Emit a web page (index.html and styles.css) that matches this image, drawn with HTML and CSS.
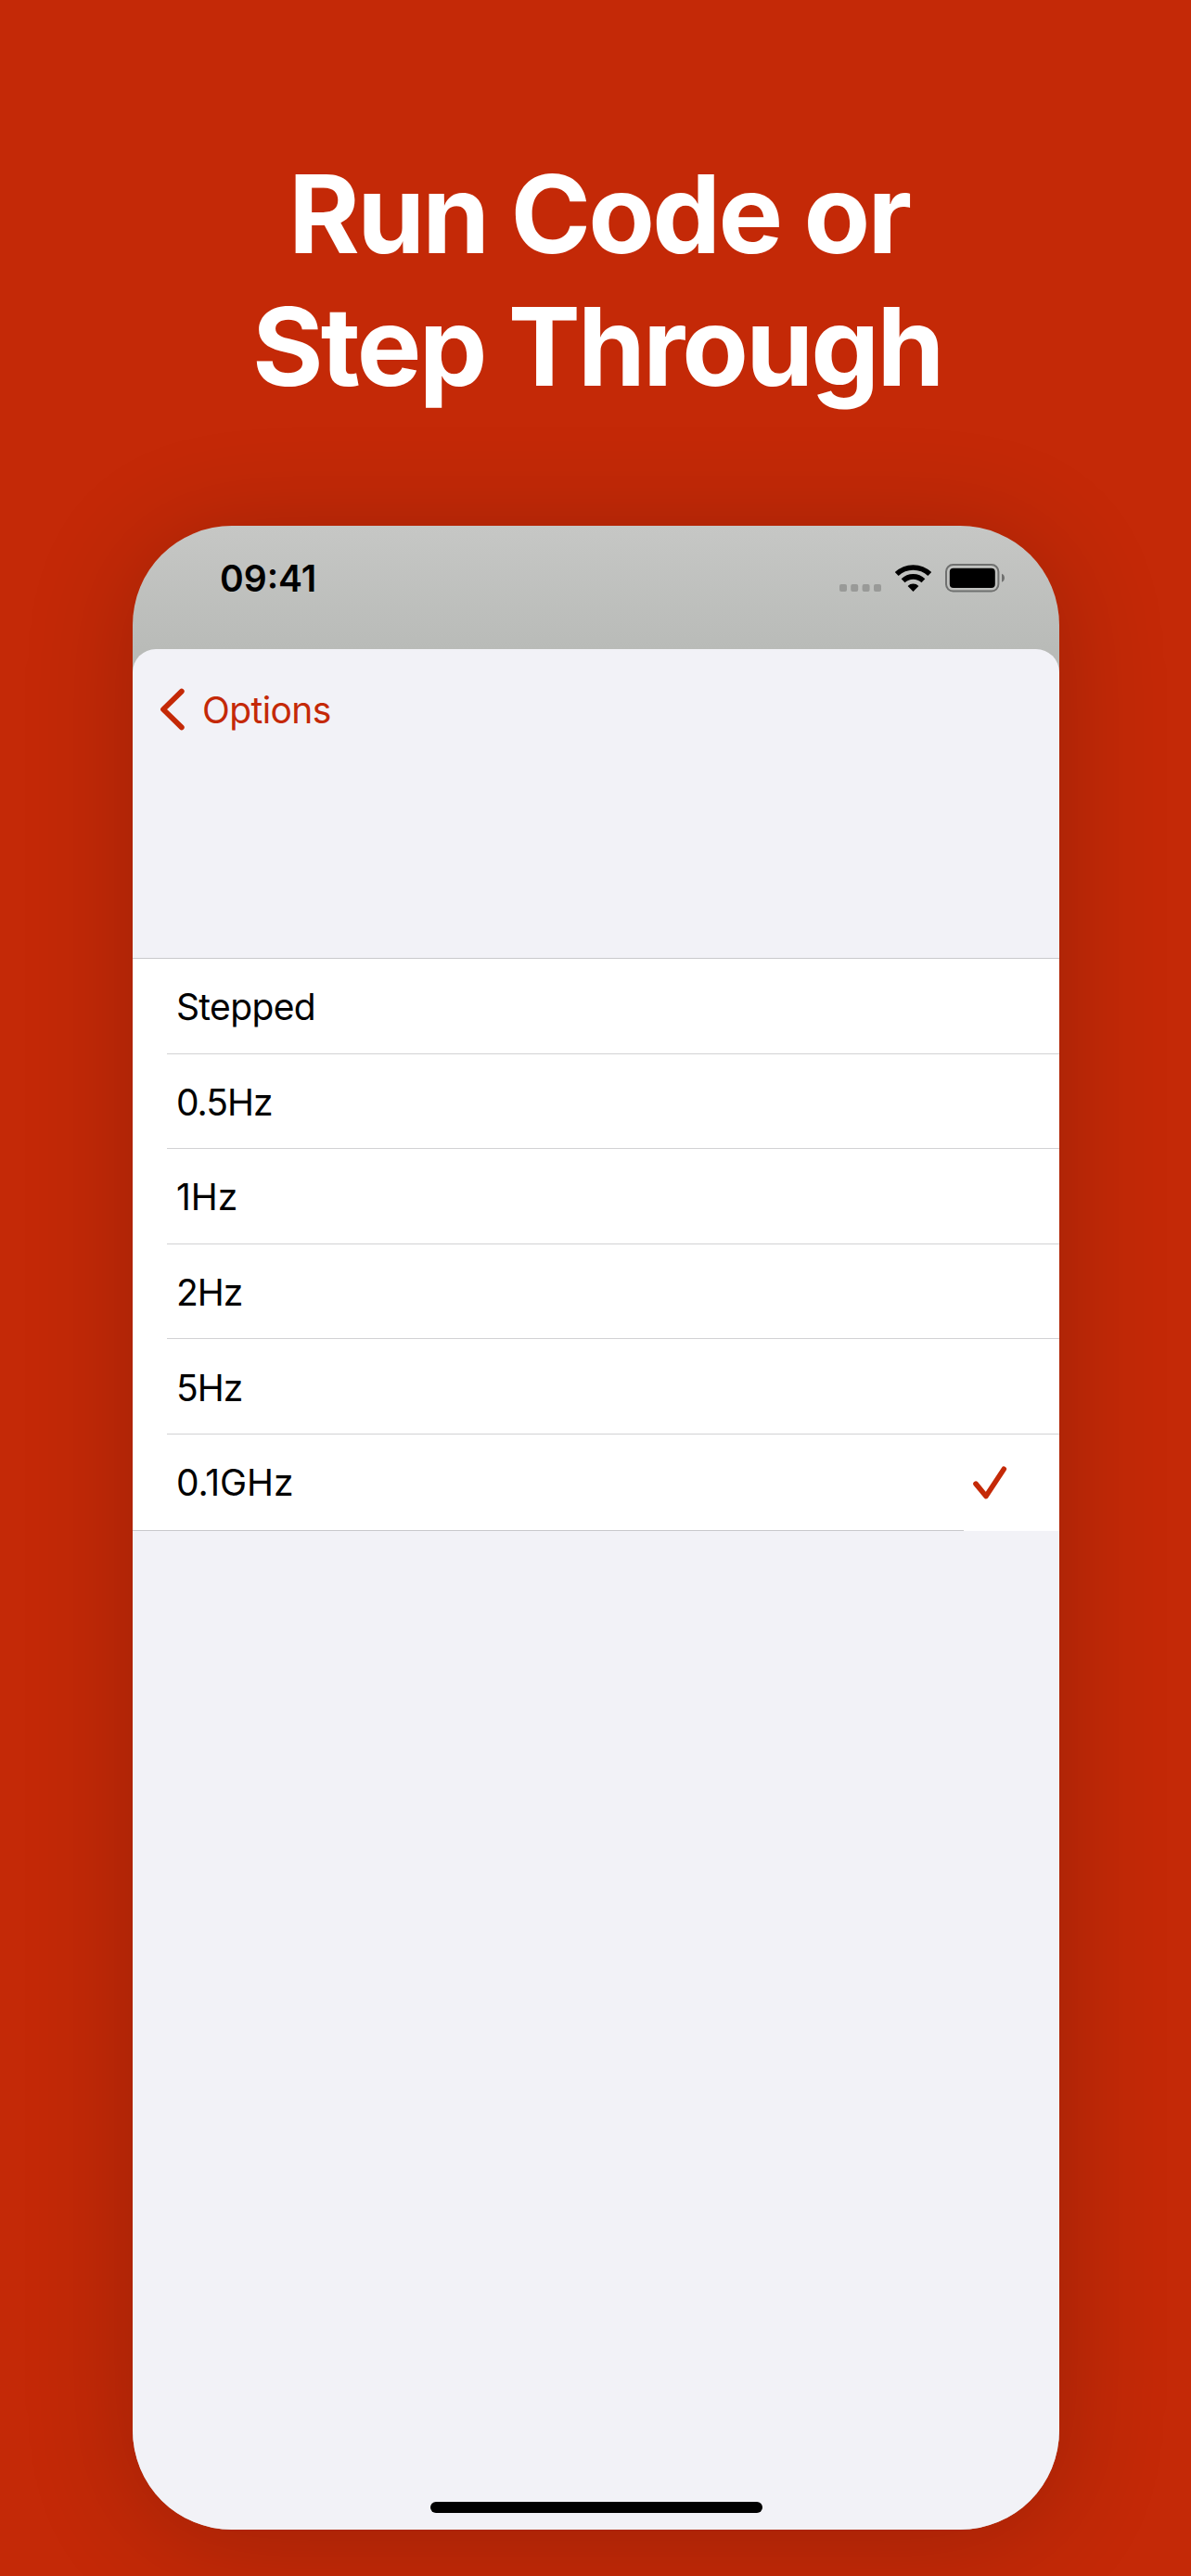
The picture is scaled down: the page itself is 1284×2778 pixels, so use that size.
FILE: index.html
```html
<!DOCTYPE html>
<html lang="en">
<head>
<meta charset="utf-8">
<title>Run Code or Step Through</title>
<link rel="stylesheet" href="styles.css">
</head>
<body>
<main class="poster">
  <h1 class="headline"><span class="line first">Run Code or</span><span class="line second">Step Through</span></h1>
  <section class="phone">
    <header class="status">
      <span class="time">09:41</span>
      <svg class="indicators" width="180" height="34" viewBox="904 606 180 34">
        <g fill="#999a98">
          <rect x="905" y="630" width="8" height="8" rx="2"/>
          <rect x="917.2" y="630" width="8" height="8" rx="2"/>
          <rect x="929.6" y="630" width="8" height="8" rx="2"/>
          <rect x="942" y="630" width="8" height="8" rx="2"/>
        </g>
        <g fill="none" stroke="#000" stroke-width="5.6">
          <path d="M966.7 619.1a25.7 25.7 0 0 1 35.6 0"/>
          <path d="M973.6 626.2a15.8 15.8 0 0 1 21.8 0"/>
        </g>
        <path d="M984.5 638l-5.9-6.1a8.6 8.6 0 0 1 11.8 0z"/>
        <rect x="1020" y="609" width="56.4" height="28.6" rx="7.5" fill="none" stroke="#6f706f" stroke-width="2"/>
        <rect x="1023.8" y="612.7" width="49" height="21.2" rx="4"/>
        <path d="M1080 618.8c4 1.6 4 7.4 0 9z" fill="#6f706f"/>
      </svg>
    </header>
    <div class="sheet">
      <nav class="nav">
        <svg class="chevron" width="28" height="46" viewBox="0 0 28 46"><path d="M23.8 3.6L4 23l19.8 19.4"/></svg>
        <span class="back">Options</span>
      </nav>
      <ul class="list">
        <li class="row word"><span>Stepped</span></li>
        <li class="row"><span>0.5Hz</span></li>
        <li class="row narrow"><span>1Hz</span></li>
        <li class="row"><span>2Hz</span></li>
        <li class="row"><span>5Hz</span></li>
        <li class="row narrow selected"><span>0.1GHz</span>
          <svg class="check" width="38" height="38" viewBox="0 0 38 38"><path d="M4 20.1l11 13.4L34.3 4.3"/></svg>
        </li>
      </ul>
      <div class="home"></div>
    </div>
  </section>
</main>
</body>
</html>
```
FILE: styles.css
```css
* { box-sizing: border-box; }
body {
  margin: 0;
  background: #c42907;
  font-family: Inter, "Liberation Sans", sans-serif;
}
.poster {
  height: 2778px;
  padding-top: 159px;
  overflow: hidden;
  display: flex;
  flex-direction: column;
}
.headline {
  margin: 0 0 122px;
  color: #fff;
  font-size: 117px;
  font-weight: 700;
  line-height: 143px;
}
.line { display: block; white-space: nowrap; }
.first { padding-left: 311px; letter-spacing: -2.7px; }
.second { padding-left: 272px; letter-spacing: -2.75px; }
.phone {
  width: 999px;
  height: 2161px;
  margin-left: 143px;
  border-radius: 107px;
  overflow: hidden;
  display: flex;
  flex-direction: column;
  background: linear-gradient(#c6c7c5, #b9bbb8 133px, #b9bbb8);
  box-shadow: 0 10px 120px rgba(0, 0, 0, .2);
}
.status {
  height: 133px;
  padding: 33px 58px 0 94px;
  display: flex;
  justify-content: space-between;
  align-items: flex-start;
}
.time {
  font-size: 39px;
  font-weight: 600;
  line-height: 47px;
}
.indicators { margin-top: 6px; }
.sheet {
  flex: 1;
  display: flex;
  flex-direction: column;
  background: #f2f2f7;
  border-radius: 25px 25px 0 0;
}
.nav {
  height: 130px;
  padding-left: 29px;
  display: flex;
  align-items: center;
  color: #c42907;
  font-size: 39px;
}
.chevron, .check {
  fill: none;
  stroke: #c42907;
  stroke-linecap: round;
  stroke-linejoin: round;
}
.chevron { stroke-width: 5.8; }
.back { margin-left: 18px; letter-spacing: -.6px; }
.list {
  list-style: none;
  margin: 203px 0 0;
  padding: 0;
  background: #fff;
  border-top: 1px solid #c9c9cc;
}
.row {
  height: 102.6px;
  padding: 2px 56px 0 10px;
  margin-left: 37px;
  display: flex;
  align-items: center;
  justify-content: space-between;
  font-size: 39px;
  letter-spacing: -1px;
  border-bottom: 1px solid #d2d2d4;
}
.row.word { letter-spacing: -.65px; }
.row.narrow { letter-spacing: -.1px; }
.row.selected {
  height: 104px;
  margin-left: 0;
  padding: 0 56px 0 47px;
  border-bottom: 0;
  background: linear-gradient(#c9c9cc, #c9c9cc) 0 100% / 896px 1px no-repeat;
}
.check { stroke-width: 5.6; }
.home {
  width: 358px;
  height: 11.5px;
  margin: auto auto 18.5px 321px;
  border-radius: 6px;
  background: #000;
}
```
